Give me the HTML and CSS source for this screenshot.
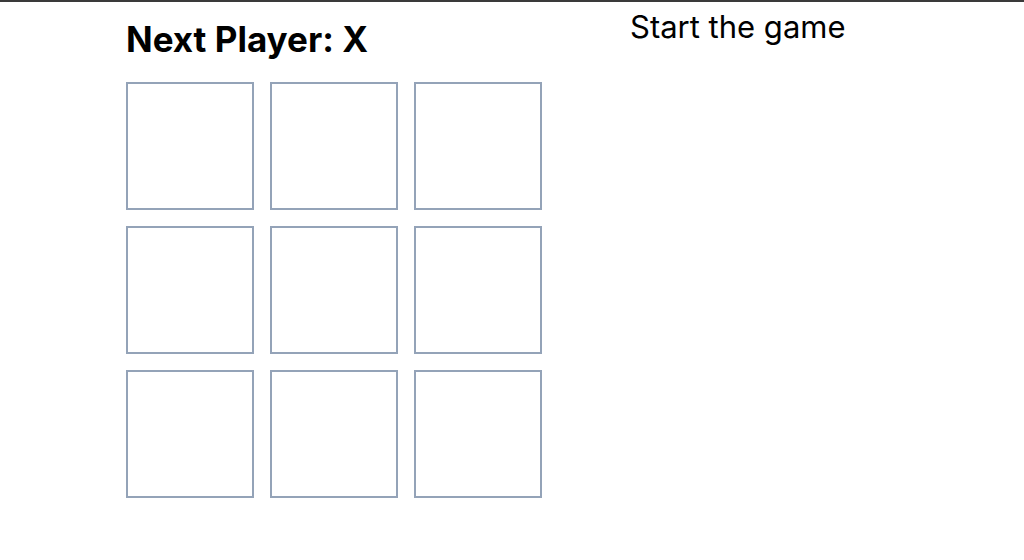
FILE: index.html
```html
<!DOCTYPE html>
<html lang="en">
<head>
    <meta charset="UTF-8">
    <meta name="viewport" content="width=device-width, initial-scale=1.0">
    <title>Tic Tac Toe</title>
    <link rel="stylesheet" href="styles.css">
</head>
<body>
    <div class="game">
        <div class="game-board">
            <h1 class="status">Next Player: X</h1>
            <div class="board">
                <button class="square"></button>
                <button class="square"></button>
                <button class="square"></button>
                <button class="square"></button>
                <button class="square"></button>
                <button class="square"></button>
                <button class="square"></button>
                <button class="square"></button>
                <button class="square"></button>
            </div>
        </div>

        <div class="game-info">
            <ol class="moves">
                <li><span class="move">Start the game</span></li>
            </ol>
        </div>
    </div>
</body>
</html>
```

FILE: styles.css
```css
/* 페이지 기본 */
body {
    margin: 0;
    border-top: 2px solid #3a3a3a;
    font-family: Inter, "Noto Sans", sans-serif;
    color: #000;
    background-color: #fff;
}

.game {
    display: flex;
    padding-left: 126px;
}

.game-board {
    width: 504px;
}

/* 다음 차례 표시 */
.status {
    margin: 17px 0 23px;
    font-size: 35px;
    font-weight: 700;
    line-height: 40px;
}

/* 3 x 3 칸 */
.board {
    display: grid;
    grid-template-columns: repeat(3, 128px);
    grid-auto-rows: 128px;
    gap: 16px;
}

.square {
    margin: 0;
    padding: 0;
    border: 2px solid #94a3b8;
    background-color: #fff;
}

/* 오른쪽 기록 */
.moves {
    margin: 0;
    padding: 0;
    list-style-type: none;
}

.move {
    display: block;
    margin-top: 7px;
    font-size: 31px;
    line-height: 36px;
}
```
